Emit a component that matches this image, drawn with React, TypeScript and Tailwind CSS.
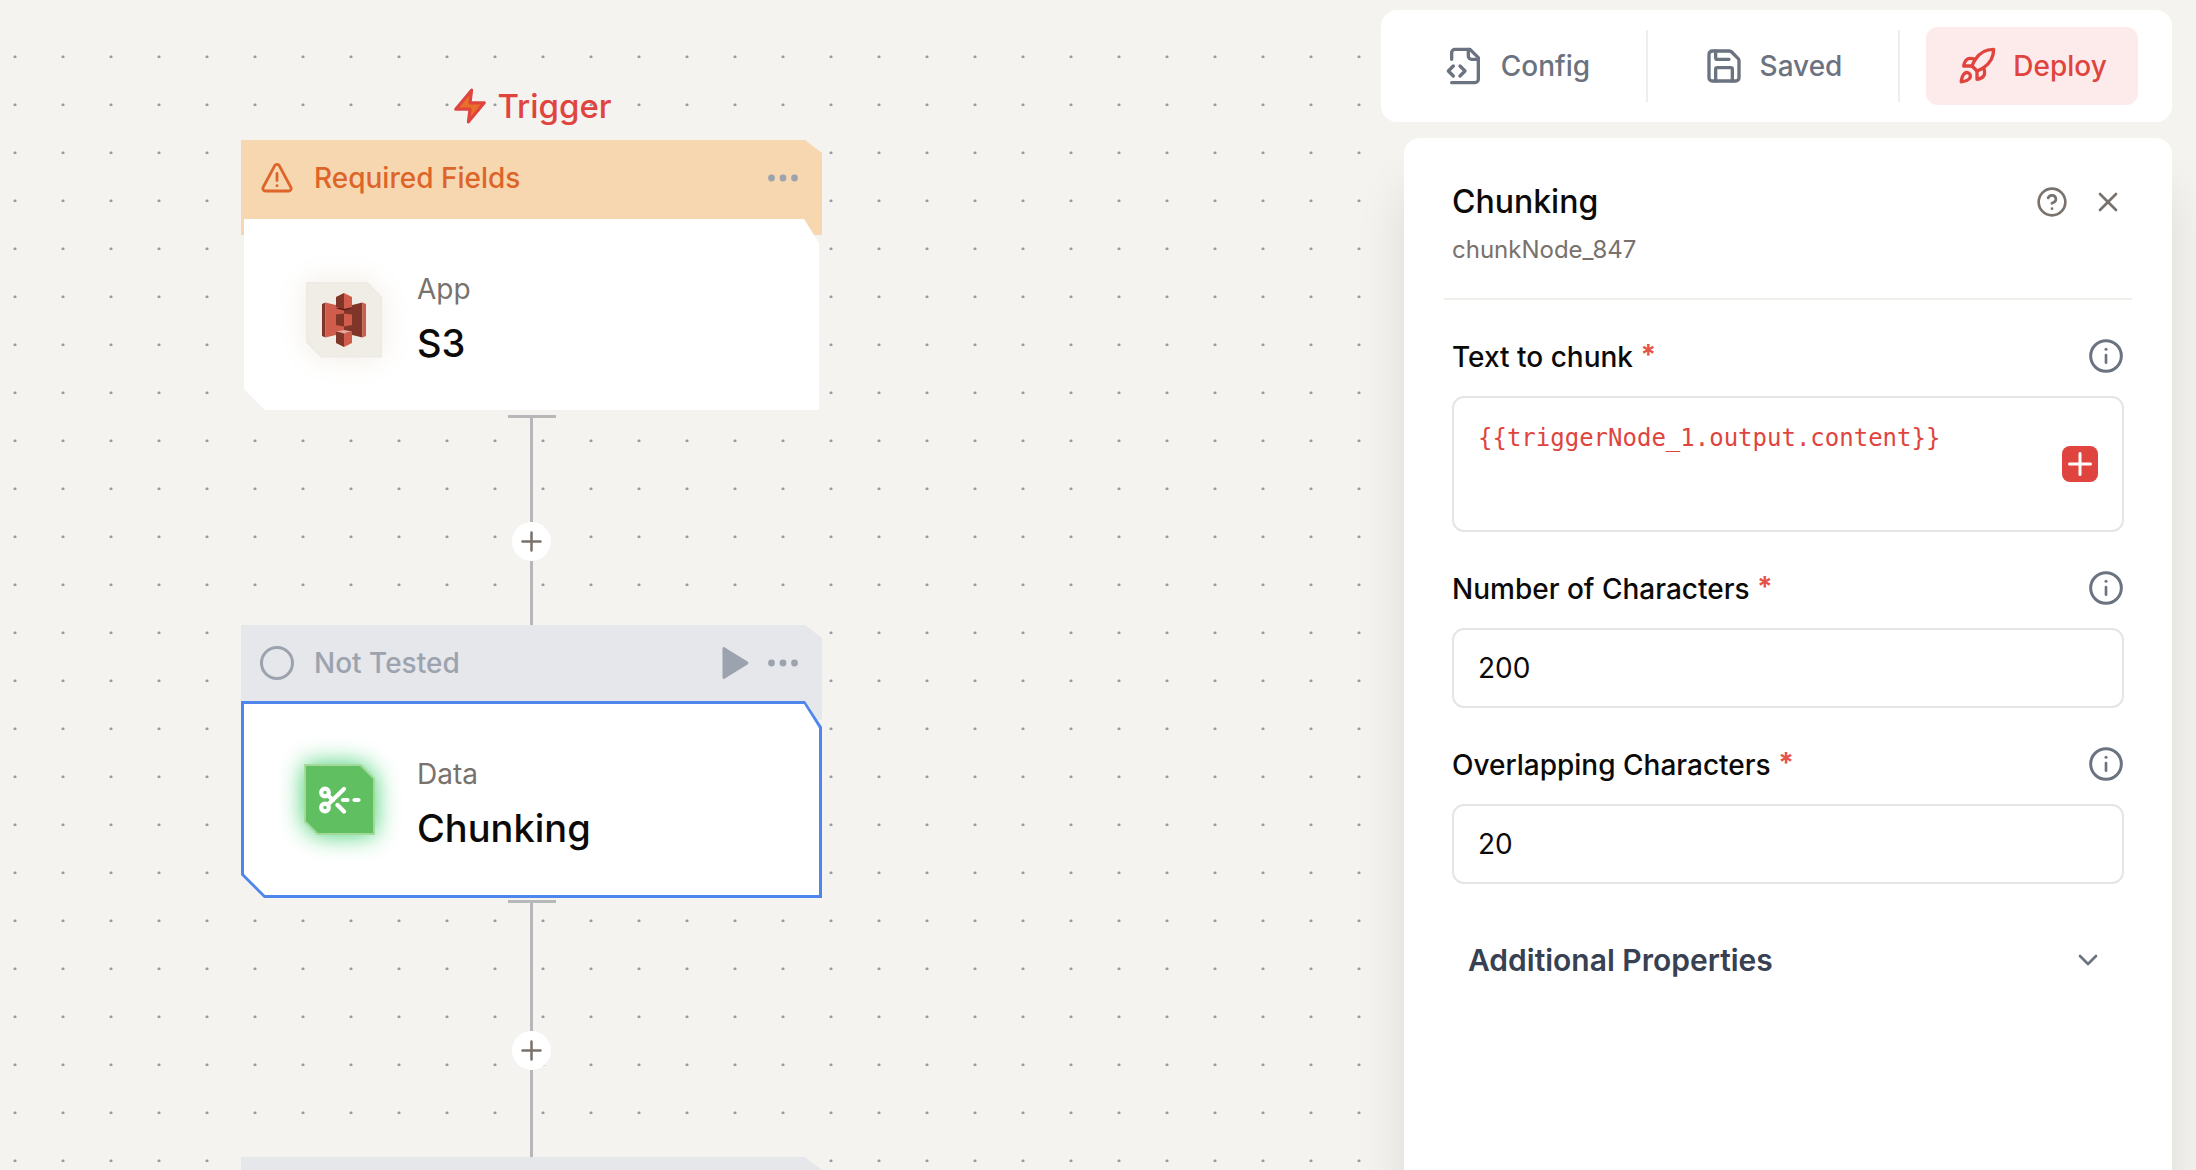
import React from "react";
import type { ReactNode } from "react";

type IconProps = { className?: string; children?: ReactNode };

function Icon({ className = "", children }: IconProps) {
  return (
    <svg
      viewBox="0 0 24 24"
      fill="none"
      stroke="currentColor"
      strokeWidth="2"
      strokeLinecap="round"
      strokeLinejoin="round"
      aria-hidden="true"
      className={`shrink-0 ${className}`}
    >
      {children}
    </svg>
  );
}

function ConfigIcon() {
  return (
    <Icon className="size-10">
      <path d="M4 22h14a2 2 0 0 0 2-2V7l-5-5H6a2 2 0 0 0-2 2v4" />
      <path d="M14 2v4a2 2 0 0 0 2 2h4" />
      <path d="m5 12-3 3 3 3" />
      <path d="m9 18 3-3-3-3" />
    </Icon>
  );
}

function SaveIcon() {
  return (
    <Icon className="size-10">
      <path d="M15.2 3a2 2 0 0 1 1.4.6l3.8 3.8a2 2 0 0 1 .6 1.4V19a2 2 0 0 1-2 2H5a2 2 0 0 1-2-2V5a2 2 0 0 1 2-2z" />
      <path d="M17 21v-7a1 1 0 0 0-1-1H8a1 1 0 0 0-1 1v7" />
      <path d="M7 3v4a1 1 0 0 0 1 1h7" />
    </Icon>
  );
}

function RocketIcon() {
  return (
    <Icon className="size-10">
      <path d="M4.5 16.5c-1.5 1.26-2 5-2 5s3.74-.5 5-2c.71-.84.7-2.13-.09-2.91a2.18 2.18 0 0 0-2.91-.09z" />
      <path d="m12 15-3-3a22 22 0 0 1 2-3.95A12.88 12.88 0 0 1 22 2c0 2.72-.78 7.5-6 11a22.35 22.35 0 0 1-4 2z" />
      <path d="M9 12H4s.55-3.03 2-4c1.62-1.08 5 0 5 0" />
      <path d="M12 15v5s3.03-.55 4-2c1.08-1.62 0-5 0-5" />
    </Icon>
  );
}

function WarningIcon() {
  return (
    <svg
      viewBox="0 0 32 32"
      fill="none"
      stroke="currentColor"
      strokeWidth="2.800"
      strokeLinecap="round"
      strokeLinejoin="round"
      aria-hidden="true"
      className="size-8 shrink-0"
    >
      <path d="M13.6 3.800a2.800 2.800 0 0 1 4.800 0L29.700 25a2.600 2.600 0 0 1-2.400 4H4.700a2.600 2.600 0 0 1-2.400-4z" />
      <path d="M16 11.500v7" />
      <path d="M16 23.600v.2" />
    </svg>
  );
}

function DotsIcon() {
  return (
    <svg viewBox="0 0 32 8" fill="currentColor" aria-hidden="true" className="h-2 w-8">
      <circle cx="4.500" cy="4" r="3.400" />
      <circle cx="16" cy="4" r="3.400" />
      <circle cx="27.500" cy="4" r="3.400" />
    </svg>
  );
}

function S3Tile() {
  return (
    <div className="mt-2.5 bg-[#edebe4] p-[2px] [clip-path:polygon(0_0,calc(100%-15px)_0,100%_15px,100%_100%,15px_100%,0_calc(100%-15px))]">
      <div className="flex size-[72px] items-center justify-center bg-[#f0ede7] [clip-path:polygon(0_0,calc(100%-14px)_0,100%_14px,100%_100%,14px_100%,0_calc(100%-14px))]">
        <svg viewBox="0 0 44 54" aria-hidden="true" className="h-[54px] w-11">
          <path fill="#7f3528" d="M0 11 3.500 9.500V44.500L0 43z" />
          <path fill="#d05c4b" d="M3.500 9.500 22 14V40L3.500 44.500z" />
          <path fill="#7f3528" d="M40.500 9.500 22 14V40L40.500 44.500z" />
          <path fill="#d05c4b" d="M40.500 9.500 44 11V43L40.500 44.500z" />
          <path fill="#5e1f18" d="M14 15.500 22 13.500 30 15.500 22 17.500z" />
          <path fill="#7f3528" d="M14 4 22 0V16L14 14z" />
          <path fill="#d05c4b" d="M30 4 22 0V16L30 14z" />
          <path fill="#7f3528" d="M14 21.500 22 20.500V33.500L14 32z" />
          <path fill="#d05c4b" d="M30 21.500 22 20.500V33.500L30 32z" />
          <path fill="#e8a79c" d="M14 38.500 22 37 30 38.500 22 40.500z" />
          <path fill="#7f3528" d="M14 38.500 22 40.500V54L14 50z" />
          <path fill="#d05c4b" d="M30 38.500 22 40.500V54L30 50z" />
        </svg>
      </div>
    </div>
  );
}

function ScissorsTile() {
  return (
    <div className="bg-[#a3d99b] p-[2px] [clip-path:polygon(0_0,calc(100%-14px)_0,100%_14px,100%_100%,13px_100%,0_calc(100%-13px))]">
      <div className="flex size-[67px] items-center justify-center bg-[#5fbf61] text-white [clip-path:polygon(0_0,calc(100%-13px)_0,100%_13px,100%_100%,12px_100%,0_calc(100%-12px))]">
        <svg
          viewBox="0 0 42 28"
          fill="none"
          stroke="currentColor"
          strokeWidth="4.200"
          strokeLinecap="round"
          aria-hidden="true"
          className="h-7 w-[42px]"
        >
          <circle cx="6" cy="6.500" r="3.800" />
          <circle cx="6" cy="21.500" r="3.800" />
          <path d="M9 18.500 25 3" />
          <path d="m9 9.500 5 4.500" />
          <path d="m18.500 19 6.500 6.500" />
          <path d="M24 14h4.500" />
          <path d="M35.500 14h4" />
        </svg>
      </div>
    </div>
  );
}

type NodeProps = {
  tone: "warning" | "idle";
  status: string;
  statusIcon: ReactNode;
  runnable?: boolean;
  selected?: boolean;
  category?: string;
  name?: string;
  tile?: ReactNode;
};

function FlowNode({ tone, status, statusIcon, runnable, selected, category, name, tile }: NodeProps) {
  return (
    <section className="relative w-full">
      <div
        className={`absolute inset-x-0 top-0 h-[95px] [clip-path:polygon(0_0,calc(100%-17px)_0,100%_13px,100%_100%,0_100%)] ${
          tone === "warning" ? "bg-[#f7d7b0]" : "bg-[#e5e7eb]"
        }`}
      />
      <header
        className={`relative flex h-[76px] items-center px-5 ${
          tone === "warning" ? "text-[#dd6529]" : "text-[#9ca3af]"
        }`}
      >
        <span className="flex size-8 items-center justify-center">{statusIcon}</span>
        <span className="ml-[21px] text-[28px] font-medium">{status}</span>
        <span className="ml-auto flex items-center gap-[18px] pr-[3px] text-[#9ca3af]">
          {runnable && (
            <button type="button" aria-label="Run node">
              <svg viewBox="0 0 28 32" fill="currentColor" aria-hidden="true" className="h-8 w-7">
                <path d="M1.500 1.500C1.500.2 2.800-.3 3.800.5L26.500 14.600c1.300.8 1.300 2 0 2.800L3.800 31.500c-1 .8-2.300.3-2.300-1z" />
              </svg>
            </button>
          )}
          <button type="button" aria-label="Node menu">
            <DotsIcon />
          </button>
        </span>
      </header>
      <div
        className={`relative p-[3px] [clip-path:polygon(0_0,calc(100%-17px)_0,100%_26px,100%_100%,23px_100%,0_calc(100%-23px))] ${
          selected ? "bg-[#4f86ee]" : ""
        }`}
      >
        <div className="flex h-[191px] items-center bg-white pl-[52px] [clip-path:polygon(0_0,calc(100%-15px)_0,100%_24px,100%_100%,21px_100%,0_calc(100%-21px))]">
          <div className="w-[121px]">
            <div
              className={`w-fit ${
                selected
                  ? "ml-2 [filter:drop-shadow(0_0_12px_#3ccf6e)]"
                  : "ml-2.5 [filter:drop-shadow(0_0_14px_#f0ece3)]"
              }`}
            >
              {tile}
            </div>
          </div>
          <div className="pt-2">
            <p className="text-[28px] leading-10 text-[#78716c]">{category}</p>
            <h2 className="mt-2 text-[38px] leading-[52px] font-medium text-[#0c0a09]">{name}</h2>
          </div>
        </div>
      </div>
    </section>
  );
}

function Connector({ before, after }: { before: string; after: string }) {
  return (
    <div className="flex flex-col items-center pt-0.5">
      <div className="h-[3px] w-12 bg-[#b8b8b8]" />
      <div className={`w-[3px] bg-[#b7b7ba] ${before}`} />
      <button
        type="button"
        aria-label="Add step"
        className="flex size-[39px] items-center justify-center rounded-full bg-white text-[#78716c]"
      >
        <svg viewBox="0 0 21 21" stroke="currentColor" strokeWidth="2.500" strokeLinecap="round" aria-hidden="true" className="size-[21px]">
          <path d="M10.500 1.500v18M1.500 10.500h18" />
        </svg>
      </button>
      <div className={`w-[3px] bg-[#b7b7ba] ${after}`} />
    </div>
  );
}

function FieldLabel({ id, children }: { id: string; children: ReactNode }) {
  return (
    <div className="flex h-10 items-center justify-between">
      <label htmlFor={id} className="pt-0.5 text-[28px] font-medium text-[#0c0a09]">
        {children} <span className="align-[2px] leading-none font-bold text-[#e5534b]">*</span>
      </label>
      <button type="button" aria-label="More information" className="-mr-0.5 text-[#6b7280]">
        <Icon className="size-10">
          <circle cx="12" cy="12" r="9.200" strokeWidth="1.800" />
          <path d="M12 11.500v4.500" strokeWidth="1.600" />
          <path d="M12 8h.01" strokeWidth="1.800" />
        </Icon>
      </button>
    </div>
  );
}

const inputClass =
  "mt-5 block h-20 w-full rounded-xl border-2 border-[#e5e5e5] bg-white px-6 text-[28px] text-[#0c0a09] outline-none";

export default function App() {
  return (
    <div className="flex h-screen overflow-hidden bg-[#f4f3ef] font-['Inter',sans-serif]">
      <main className="mt-2.5 min-w-0 flex-1 overflow-hidden bg-[radial-gradient(circle_at_15px_47px,#9a9aa2_1px,transparent_2px)] bg-size-[48px_48px]">
        <div className="ml-[241px] flex w-[581px] flex-col pt-[75px]">
          <div className="flex h-[55px] items-start justify-center gap-2 text-[#e0443e]">
            <svg
              viewBox="0 0 24 24"
              fill="#e8702a"
              stroke="currentColor"
              strokeWidth="2"
              strokeLinejoin="round"
              aria-hidden="true"
              className="mt-0.5 size-[38px] shrink-0"
            >
              <path d="M13 2 3 14h9l-1 8 10-12h-9z" />
            </svg>
            <h1 className="text-[33px] leading-[42px] font-medium">Trigger</h1>
          </div>
          <FlowNode
            tone="warning"
            status="Required Fields"
            statusIcon={<WarningIcon />}
            category="App"
            name="S3"
            tile={<S3Tile />}
          />
          <Connector before="h-[104px]" after="h-16" />
          <FlowNode
            tone="idle"
            status="Not Tested"
            statusIcon={<span className="size-[34px] shrink-0 rounded-full border-[3px] border-current" />}
            runnable
            selected
            category="Data"
            name="Chunking"
            tile={<ScissorsTile />}
          />
          <Connector before="h-32" after="h-[87px]" />
          <div className="h-24 shrink-0 bg-[#e5e7eb] [clip-path:polygon(0_0,calc(100%-17px)_0,100%_13px,100%_100%,0_100%)]" />
        </div>
      </main>

      <div className="flex w-[815px] shrink-0 flex-col pt-2.5 pr-6">
        <nav className="flex h-28 items-center rounded-2xl bg-white pr-[34px] text-[28px] font-medium text-[#6b7280]">
          <button type="button" className="flex h-[72px] flex-1 items-center justify-center gap-4 border-r-2 border-[#f0eee9] pl-2">
            <ConfigIcon />
            Config
          </button>
          <button type="button" className="flex h-[72px] w-[252px] items-center justify-center gap-4 border-r-2 border-[#f0eee9]">
            <SaveIcon />
            Saved
          </button>
          <button
            type="button"
            className="ml-[26px] flex h-[78px] w-[212px] items-center justify-center gap-4 rounded-xl bg-[#fcebea] text-[#e0443e]"
          >
            <RocketIcon />
            Deploy
          </button>
        </nav>

        <aside className="mt-4 ml-[23px] flex-1 rounded-t-2xl bg-white px-10 pt-10 shadow-[0_50px_50px_0_rgba(0,0,0,0.1)]">
          <header className="border-b-2 border-[#f0eee9] pb-7">
            <div className="flex h-12 items-center pl-2">
              <h2 className="text-[32px] font-medium text-[#0c0a09]">Chunking</h2>
              <span className="ml-auto flex items-center gap-6 pr-2 text-[#78716c]">
                <button type="button" aria-label="Help">
                  <Icon className="size-8">
                    <circle cx="12" cy="12" r="10" />
                    <path d="M9.090 9a3 3 0 0 1 5.830 1c0 2-3 3-3 3" />
                    <path d="M12 17h.01" />
                  </Icon>
                </button>
                <button type="button" aria-label="Close">
                  <Icon className="size-8">
                    <path d="M18 6 6 18" />
                    <path d="m6 6 12 12" />
                  </Icon>
                </button>
              </span>
            </div>
            <p className="pt-1 pl-2 text-2xl leading-10 text-[#78716c]">chunkNode_847</p>
          </header>

          <form className="px-2 pt-9">
            <FieldLabel id="text-to-chunk">Text to chunk</FieldLabel>
            <div className="relative mt-5">
              <textarea
                id="text-to-chunk"
                spellCheck={false}
                defaultValue="{{triggerNode_1.output.content}}"
                className="block h-[136px] w-full resize-none rounded-xl border-2 border-[#e5e5e5] py-6 pr-20 pl-6 font-['DejaVu_Sans_Mono',monospace] text-2xl text-[#e0443e] outline-none"
              />
              <button
                type="button"
                aria-label="Insert variable"
                className="absolute top-[50px] right-[26px] flex size-9 items-center justify-center rounded-lg bg-[#e0443e] text-white"
              >
                <svg viewBox="0 0 24 24" stroke="currentColor" strokeWidth="3" strokeLinecap="round" aria-hidden="true" className="size-6">
                  <path d="M12 1.500v21M1.500 12h21" />
                </svg>
              </button>
            </div>

            <div className="mt-9">
              <FieldLabel id="char-count">Number of Characters</FieldLabel>
              <input id="char-count" type="text" defaultValue="200" className={inputClass} />
            </div>

            <div className="mt-9">
              <FieldLabel id="overlap-count">Overlapping Characters</FieldLabel>
              <input id="overlap-count" type="text" defaultValue="20" className={inputClass} />
            </div>

            <button
              type="button"
              aria-expanded="false"
              className="mt-12 flex h-14 w-full items-center justify-between pr-5 pl-4 text-[30px] font-semibold text-[#374151]"
            >
              Additional Properties
              <Icon className="size-8 text-[#6b7280]">
                <path d="m6 9 6 6 6-6" />
              </Icon>
            </button>
          </form>
        </aside>
      </div>
    </div>
  );
}
